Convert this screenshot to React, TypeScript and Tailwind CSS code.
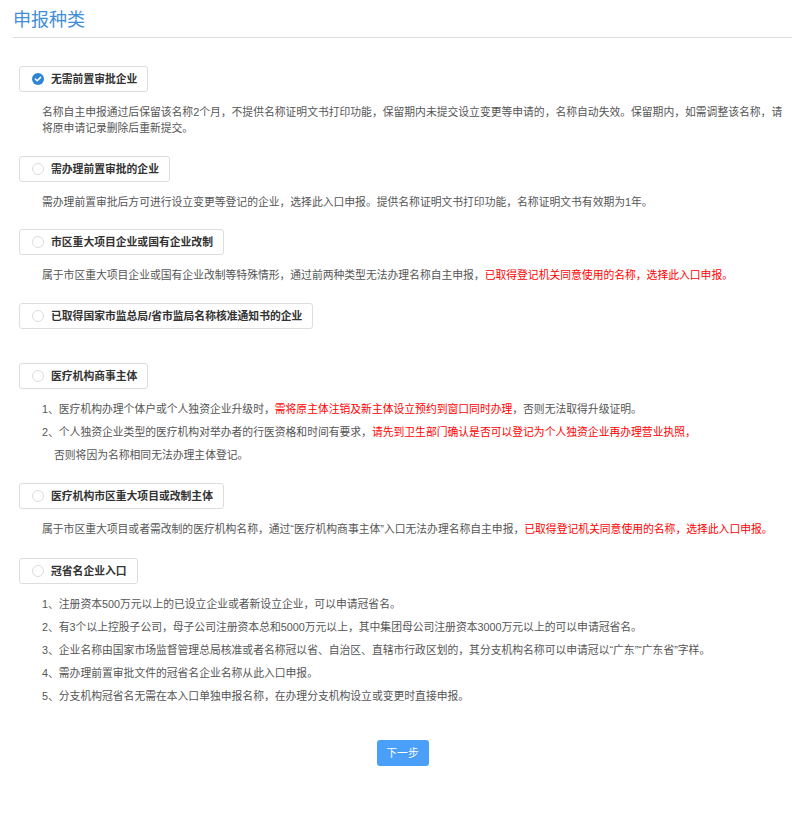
import React, { useState } from 'react'

type Line = { text: React.ReactNode; indent?: boolean }

interface Option {
  id: string
  label: string
  gap: number
  desc?: React.ReactNode
  items?: Line[]
}

const Red = ({ children }: { children: React.ReactNode }) => <span className="text-[#ff0000]">{children}</span>

const options: Option[] = [
  {
    id: 'a',
    label: '无需前置审批企业',
    gap: 28,
    desc: '名称自主申报通过后保留该名称2个月，不提供名称证明文书打印功能，保留期内未提交设立变更等申请的，名称自动失效。保留期内，如需调整该名称，请将原申请记录删除后重新提交。',
  },
  {
    id: 'b',
    label: '需办理前置审批的企业',
    gap: 20,
    desc: '需办理前置审批后方可进行设立变更等登记的企业，选择此入口申报。提供名称证明文书打印功能，名称证明文书有效期为1年。',
  },
  {
    id: 'c',
    label: '市区重大项目企业或国有企业改制',
    gap: 19,
    desc: (
      <>
        属于市区重大项目企业或国有企业改制等特殊情形，通过前两种类型无法办理名称自主申报，
        <Red>已取得登记机关同意使用的名称，选择此入口申报。</Red>
      </>
    ),
  },
  { id: 'd', label: '已取得国家市监总局/省市监局名称核准通知书的企业', gap: 20 },
  {
    id: 'e',
    label: '医疗机构商事主体',
    gap: 34,
    items: [
      {
        text: (
          <>
            1、医疗机构办理个体户或个人独资企业升级时，<Red>需将原主体注销及新主体设立预约到窗口同时办理</Red>，否则无法取得升级证明。
          </>
        ),
      },
      {
        text: (
          <>
            2、个人独资企业类型的医疗机构对举办者的行医资格和时间有要求，<Red>请先到卫生部门确认是否可以登记为个人独资企业再办理营业执照，</Red>
          </>
        ),
      },
      { text: '否则将因为名称相同无法办理主体登记。', indent: true },
    ],
  },
  {
    id: 'f',
    label: '医疗机构市区重大项目或改制主体',
    gap: 20,
    desc: (
      <>
        属于市区重大项目或者需改制的医疗机构名称，通过“医疗机构商事主体”入口无法办理名称自主申报，
        <Red>已取得登记机关同意使用的名称，选择此入口申报。</Red>
      </>
    ),
  },
  {
    id: 'g',
    label: '冠省名企业入口',
    gap: 21,
    items: [
      { text: '1、注册资本500万元以上的已设立企业或者新设立企业，可以申请冠省名。' },
      { text: '2、有3个以上控股子公司，母子公司注册资本总和5000万元以上，其中集团母公司注册资本3000万元以上的可以申请冠省名。' },
      { text: '3、企业名称由国家市场监督管理总局核准或者名称冠以省、自治区、直辖市行政区划的，其分支机构名称可以申请冠以“广东”“广东省”字样。' },
      { text: '4、需办理前置审批文件的冠省名企业名称从此入口申报。' },
      { text: '5、分支机构冠省名无需在本入口单独申报名称，在办理分支机构设立或变更时直接申报。' },
    ],
  },
]

function Radio({ checked }: { checked: boolean }) {
  if (checked) {
    return (
      <svg width="12" height="12" viewBox="0 0 12 12" className="shrink-0">
        <circle cx="6" cy="6" r="6" fill="#2d84d2" />
        <path d="M3.4 6.1 L5.2 7.8 L8.6 4.4" fill="none" stroke="#fff" strokeWidth="1.5" strokeLinecap="round" strokeLinejoin="round" />
      </svg>
    )
  }
  return <span className="block h-3 w-3 shrink-0 rounded-full border border-[#dcdcdc] bg-white" />
}

export default function App() {
  const [selected, setSelected] = useState('a')

  return (
    <div className="min-h-[815px] w-[800px] bg-white pl-[13px] pr-[8px] font-['Liberation_Sans','Noto_Sans_CJK_SC',sans-serif] text-[10.8px] text-[#555]">
      <h1 className="border-b border-[#dddddd] pt-[8px] pb-[5px] text-[18px] font-normal leading-[24px] text-[#3f8ed8]">
        申报种类
      </h1>

      <div className="pl-[6px]">
        {options.map(opt => (
          <div key={opt.id} style={{ marginTop: opt.gap }}>
            <button
              type="button"
              onClick={() => setSelected(opt.id)}
              className="flex h-[26px] items-center gap-[7px] rounded-[3px] border border-[#dddddd] bg-white pl-[12px] pr-[10px]"
            >
              <Radio checked={selected === opt.id} />
              <span className="font-bold leading-[16px] text-[#333]">{opt.label}</span>
            </button>

            {opt.desc && (
              <p className="mt-[12px] ml-[23px] mr-[5px] leading-[16px]">{opt.desc}</p>
            )}

            {opt.items && (
              <div className="mt-[12px] ml-[23px] flex flex-col gap-[7px]">
                {opt.items.map((item, i) => (
                  <p key={i} className={item.indent ? 'pl-[12px] leading-[16px]' : 'leading-[16px]'}>
                    {item.text}
                  </p>
                ))}
              </div>
            )}
          </div>
        ))}
      </div>

      <div className="mt-[36px] flex justify-center">
        <button
          type="button"
          className="h-[26px] w-[52px] rounded-[3px] bg-[#4a9ff8] text-[10.8px] text-white"
        >
          下一步
        </button>
      </div>
    </div>
  )
}
